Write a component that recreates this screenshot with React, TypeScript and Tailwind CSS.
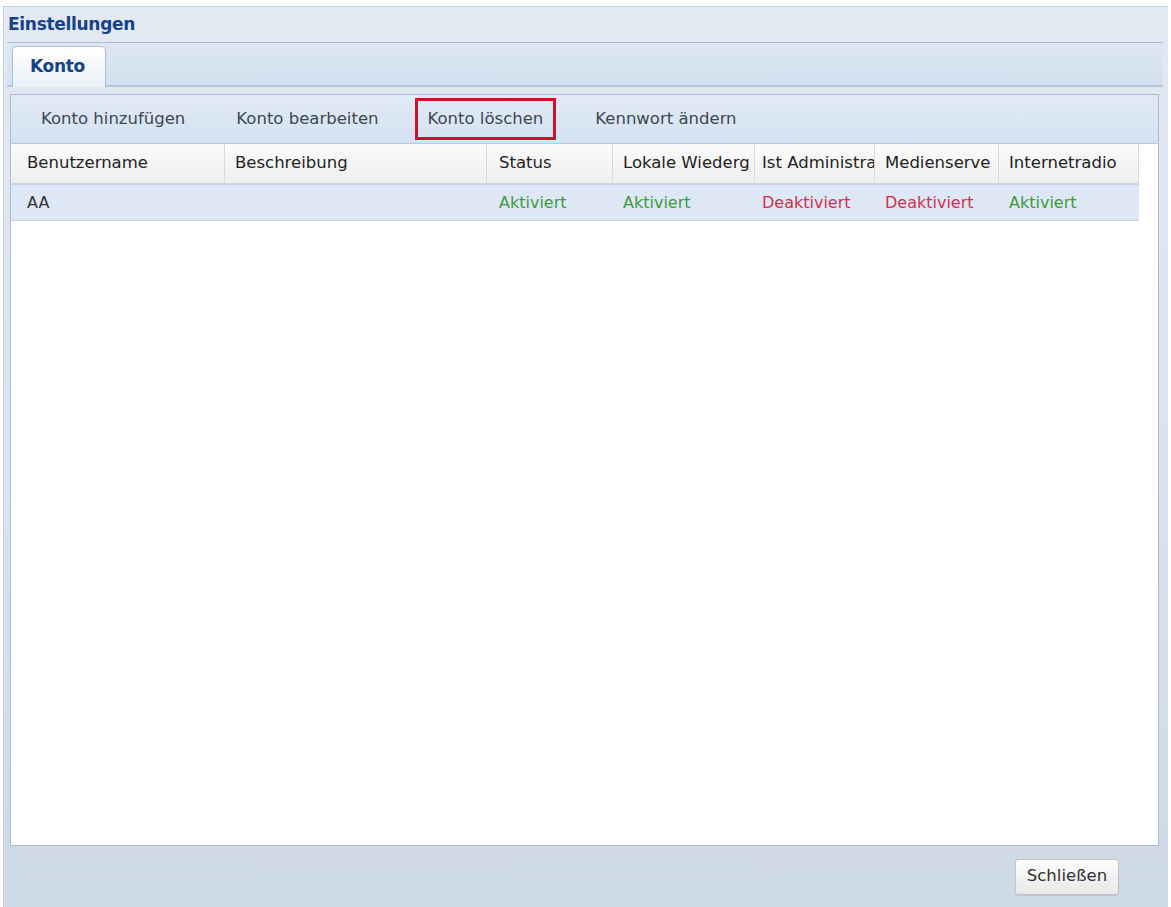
import React from "react";

type Col = { title: string; width: number; pad: string };

// header labels as the grid shows them (columns are too narrow for the full names)
const columns: Col[] = [
  { title: "Benutzername", width: 214, pad: "pl-[16px]" },
  { title: "Beschreibung", width: 262, pad: "pl-[10px]" },
  { title: "Status", width: 126, pad: "pl-[12px]" },
  { title: "Lokale Wiederg", width: 142, pad: "pl-[10px]" },
  { title: "Ist Administra", width: 120, pad: "pl-[7px]" },
  { title: "Medienserve", width: 124, pad: "pl-[10px]" },
  { title: "Internetradio", width: 140, pad: "pl-[10px]" },
];

type Cell = { text: string; tone?: "on" | "off" };

const rows: Cell[][] = [
  [
    { text: "AA" },
    { text: "" },
    { text: "Aktiviert", tone: "on" },
    { text: "Aktiviert", tone: "on" },
    { text: "Deaktiviert", tone: "off" },
    { text: "Deaktiviert", tone: "off" },
    { text: "Aktiviert", tone: "on" },
  ],
];

const font = { fontFamily: '"DejaVu Sans", Verdana, sans-serif' };

export default function App() {
  return (
    <div
      className="h-[907px] w-[1171px] overflow-hidden bg-white pl-[3px] pr-[3px] pt-[6px]"
      style={font}
    >
      <div className="flex h-[901px] flex-col border-l border-t border-[#c3cfdc] bg-gradient-to-b from-[#e3e9f1] via-[#dbe3ee] to-[#ced9e6]">
        {/* title */}
        <div className="flex h-[35px] items-center pl-[4px]">
          <span className="text-[17px] font-bold tracking-[-0.3px] text-[#15428b]">Einstellungen</span>
        </div>

        {/* tab strip */}
        <div className="ml-[3px] mr-[5px] flex h-[45px] items-end border-b-2 border-t border-[#a9bdd4] border-b-[#b3c6dc] bg-gradient-to-b from-[#dde7f4] to-[#d4e0ef] pl-[5px]">
          <div className="-mb-[2px] flex h-[41px] w-[94px] items-center rounded-t-[5px] border border-b-0 border-[#aebfd3] bg-gradient-to-b from-[#ffffff] to-[#e9f0f8] pl-[17px]">
            <span className="text-[17px] font-bold tracking-[-0.3px] text-[#15428b]">Konto</span>
          </div>
        </div>

        {/* panel */}
        <div className="ml-[6px] mr-[9px] mt-[7px] flex h-[752px] flex-col border border-[#a9bdd0] bg-white">
          {/* toolbar */}
          <div className="flex h-[49px] items-center border-b border-[#b8c9dc] bg-gradient-to-b from-[#e1eaf6] to-[#d5e2f2] pl-[17px] text-[16.5px] text-[#3d4750]">
            <div className="px-[13px]">Konto hinzufügen</div>
            <div className="ml-[25px] px-[13px]">Konto bearbeiten</div>
            <div className="ml-[23px] flex h-[42px] items-center border-[3px] border-[#c8142a] px-[10px]">
              Konto löschen
            </div>
            <div className="ml-[26px] px-[13px]">Kennwort ändern</div>
          </div>

          {/* column headers */}
          <div className="flex h-[40px]">
            <div className="flex border-b border-[#d5d5d5] bg-gradient-to-b from-[#fbfbfb] to-[#eeeeee]">
              {columns.map((c) => (
                <div
                  key={c.title}
                  className={`flex items-center overflow-hidden whitespace-nowrap border-r border-[#d9d9d9] text-[16.5px] text-[#222] ${c.pad}`}
                  style={{ width: c.width }}
                >
                  {c.title}
                </div>
              ))}
            </div>
            <div className="flex-1 bg-white" />
          </div>

          {/* rows */}
          {rows.map((r, ri) => (
            <div key={ri} className="flex">
              <div className="flex h-[37px] border-b border-t border-[#c6d3e4] bg-[#dde7f5]">
                {r.map((cell, ci) => (
                  <div
                    key={ci}
                    className={`flex items-center overflow-hidden whitespace-nowrap text-[16px] ${columns[ci].pad} ${
                      cell.tone === "on"
                        ? "text-[#3f9a3c]"
                        : cell.tone === "off"
                        ? "text-[#d2314d]"
                        : "text-[#333]"
                    }`}
                    style={{ width: columns[ci].width }}
                  >
                    {cell.text}
                  </div>
                ))}
              </div>
            </div>
          ))}

          <div className="flex-1 bg-white" />
        </div>

        {/* footer */}
        <div className="flex flex-1 items-center justify-end pr-[49px]">
          <button className="flex h-[36px] w-[104px] items-center justify-center rounded-[3px] border border-[#c3c3c3] bg-gradient-to-b from-[#fdfdfd] to-[#e8e8e8] text-[16.5px] text-[#333] shadow-[0_1px_1px_rgba(0,0,0,0.08)]">
            Schließen
          </button>
        </div>
      </div>
    </div>
  );
}
